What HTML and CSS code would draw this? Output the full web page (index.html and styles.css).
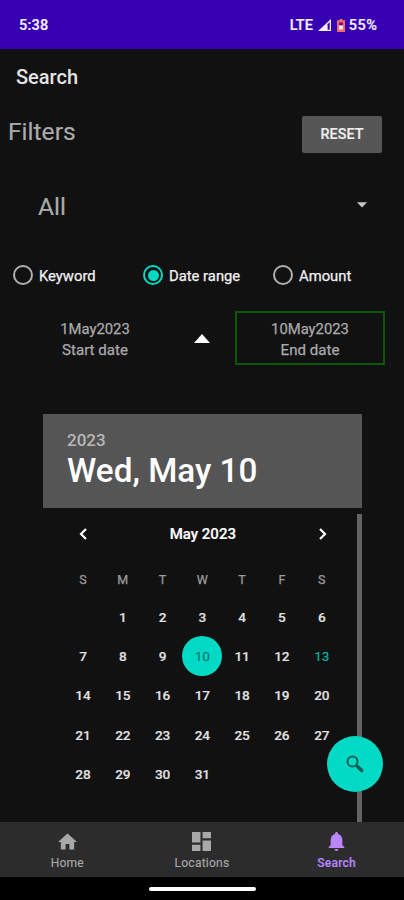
FILE: index.html
```html
<!DOCTYPE html>
<html lang="en">
<head>
<meta charset="utf-8">
<title>Search</title>
<link rel="stylesheet" href="styles.css">
</head>
<body>
<div class="screen">
  <header class="status">
    <span class="clock">5:38</span>
    <div class="indicators">
      <span class="lte">LTE</span>
      <svg class="signal" viewBox="0 0 13 12"><path d="M0 12 13 0v12z" fill="#f4efff"/><path d="M9.6 5.2 11.7 3v7.7H9.6z" fill="#3700b3"/></svg>
      <svg class="battery" viewBox="0 0 8 13"><path d="M2.5 0h3v1.3H8V13H0V1.3h2.5z" fill="#f5686c"/><path d="M2 3.5h4v3H2z" fill="#6b1780"/><path d="M2 6.5h4v4H2z" fill="#fff0ee"/></svg>
      <span class="percent">55%</span>
    </div>
  </header>
  <h1 class="title"><span>Search</span></h1>
  <main class="content">
    <div class="filters"><h2>Filters</h2><button class="reset">RESET</button></div>
    <div class="select"><span>All</span><svg viewBox="0 0 10 6"><path d="M0 .3h10L5 5.5z" fill="#c6c6c6"/></svg></div>
    <div class="radios">
      <div class="radio"><i class="ring"></i><span>Keyword</span></div>
      <div class="radio"><i class="ring on"></i><span>Date range</span></div>
      <div class="radio"><i class="ring"></i><span>Amount</span></div>
    </div>
    <div class="dates">
      <div class="date"><span class="value">1May2023</span><span>Start date</span></div>
      <svg class="up" viewBox="0 0 16 9"><path d="M0 9 8 0l8 9z" fill="#fff"/></svg>
      <div class="date active"><span class="value">10May2023</span><span>End date</span></div>
    </div>
    <section class="picker">
      <div class="picked"><span class="year">2023</span><span class="day">Wed, May 10</span></div>
      <div class="scroll">
        <div class="month">
          <div class="month-nav">
            <svg viewBox="0 0 8 12"><path d="M7 1 2 6l5 5" /></svg>
            <span>May 2023</span>
            <svg viewBox="0 0 8 12"><path d="m1 1 5 5-5 5" /></svg>
          </div>
          <div class="week"><span>S</span><span>M</span><span>T</span><span>W</span><span>T</span><span>F</span><span>S</span></div>
          <div class="days"></div>
        </div>
        <div class="bar"></div>
      </div>
    </section>
  </main>
  <button class="fab" aria-label="Search"><svg viewBox="0 0 18 18"><circle cx="6.5" cy="6.5" r="5" fill="none" stroke="#075e55" stroke-width="2"/><path d="m10 10 1.6 1.5" stroke="#075e55" stroke-width="2"/><path d="m11.8 11.8 3.9 3.7" stroke="#075e55" stroke-width="3.6" stroke-linecap="round"/></svg></button>
  <nav class="tabs">
    <div class="tab"><svg viewBox="2 3 20 17"><path d="M10 20v-6h4v6h5v-8h3L12 3 2 12h3v8z"/></svg><span>Home</span></div>
    <div class="tab"><svg viewBox="3 3 18 18"><path d="M3 13h8V3H3zm0 8h8v-6H3zm10 0h8V11h-8zm0-18v6h8V3z"/></svg><span>Locations</span></div>
    <div class="tab current"><svg viewBox="4 2.5 16 19.5"><path d="M12 22c1.1 0 2-.9 2-2h-4c0 1.1.89 2 2 2zm6-6v-5c0-3.07-1.64-5.64-4.5-6.32V4c0-.83-.67-1.5-1.5-1.5s-1.5.67-1.5 1.5v.68C7.63 5.36 6 7.92 6 11v5l-2 2v1h16v-1z"/></svg><span>Search</span></div>
  </nav>
  <div class="gesture"><i></i></div>
</div>
<script src="calendar.js"></script>
</body>
</html>
```
FILE: calendar.js
```js
const days = document.querySelector(".days");
days.innerHTML = "<span></span>";
for (let d = 1; d <= 31; d++) {
  const cell = document.createElement("span");
  cell.textContent = d;
  if (d === 10) cell.className = "selected";
  if (d === 13) cell.className = "today";
  days.append(cell);
}
```
FILE: styles.css
```css
* { box-sizing: border-box; }
body { margin: 0; background: #111; font-family: Roboto, "Liberation Sans", sans-serif; color: #fff; }
h1, h2 { margin: 0; }
svg { display: block; }
button { border: 0; padding: 0; font-family: inherit; }
.screen { position: relative; width: 404px; height: 900px; overflow: hidden; display: flex; flex-direction: column; }
.status { height: 49px; flex: none; background: #3700b3; display: flex; align-items: center; justify-content: space-between; padding: 1px 27px 0 19px; font-size: 14.5px; font-weight: 500; color: #f4efff; -webkit-text-stroke: .2px currentColor; }
.clock { letter-spacing: .2px; }
.percent { letter-spacing: .5px; margin-right: -.5px; }
.indicators { display: flex; align-items: center; }
.signal { width: 13px; height: 12px; margin: 0 6px 0 5px; }
.battery { width: 8px; height: 13px; margin-right: 4px; }
.title { height: 56px; flex: none; display: flex; align-items: center; padding-left: 16px; font-size: 20px; font-weight: 500; color: #e4e4e4; }
.content { flex: 1; min-height: 0; display: flex; flex-direction: column; }
.filters { height: 54px; flex: none; display: flex; align-items: center; justify-content: space-between; padding: 0 22px 0 8px; }
.filters h2 { font-size: 24.6px; font-weight: 400; color: #aaa; margin-top: -1px; -webkit-text-stroke: .2px currentColor; }
.reset { width: 80px; height: 37px; margin-top: 4px; background: #565656; border-radius: 2px; color: #ededed; font-size: 14.4px; font-weight: 500; -webkit-text-stroke: .2px currentColor; }
.select { height: 94px; flex: none; display: flex; align-items: center; justify-content: space-between; padding: 0 37px 0 38px; font-size: 24.5px; color: #aaa; -webkit-text-stroke: .2px currentColor; }
.select svg { width: 10px; height: 6px; margin-top: -3px; }
.radios { height: 44px; flex: none; display: grid; grid-template-columns: 130px 130px 1fr; padding-left: 13px; }
.radio { display: flex; align-items: center; gap: 6px; font-size: 14.8px; color: #f2f2f2; -webkit-text-stroke: .25px currentColor; }
.radio span { padding-top: 1px; }
.ring { width: 20px; height: 20px; border: 2px solid #b0b0b0; border-radius: 50%; display: grid; place-items: center; }
.ring.on { border-color: #03dac5; }
.ring.on::after { content: ""; width: 11px; height: 11px; border-radius: 50%; background: #03dac5; }
.dates { height: 72px; flex: none; display: grid; grid-template-columns: 150px 65px 150px; padding: 14px 0 4px 20px; }
.date { height: 54px; display: flex; flex-direction: column; align-items: center; padding-top: 8px; font-size: 15.1px; line-height: 20.5px; color: #aaa; }
.date .value { font-size: 14.8px; }
.date.active { border: 2px solid #0c570c; padding-top: 6px; }
.up { width: 16px; height: 9px; margin: 23px 0 0 24px; }
.picker { width: 319px; flex: 1; min-height: 0; margin: 45px 0 0 43px; display: flex; flex-direction: column; }
.picked { height: 94px; flex: none; background: #555; padding: 16px 24px; display: flex; flex-direction: column; }
.year { font-size: 17px; line-height: 21px; font-weight: 500; color: #b8b8b8; }
.day { font-size: 33.3px; line-height: 40px; font-weight: 500; }
.scroll { flex: 1; min-height: 0; padding-top: 6px; display: flex; justify-content: space-between; }
.month { width: 278.6px; margin-left: 20px; }
.month-nav { height: 40px; display: flex; align-items: center; justify-content: space-between; padding: 0 15px 0 16px; font-size: 15px; font-weight: 500; -webkit-text-stroke: .2px currentColor; }
.month-nav svg { width: 8px; height: 12px; fill: none; stroke: #fff; stroke-width: 2.2; }
.week, .days { display: grid; grid-template-columns: repeat(7, 39.8px); text-align: center; }
.week { height: 43px; align-items: center; padding-top: 7px; font-size: 12.5px; color: #9c9c9c; }
.week span, .date span { -webkit-text-stroke: .25px currentColor; }
.days { grid-auto-rows: 39.3px; font-size: 13.6px; font-weight: 500; color: #e2e2e2; letter-spacing: -.2px; -webkit-text-stroke: .15px currentColor; }
.days span { display: grid; place-items: center; }
.days .selected { height: 39.8px; border-radius: 50%; background: #03dac5; color: #07766c; font-weight: 400; }
.days .today { color: #03b9a8; font-weight: 400; }
.bar { width: 5px; background: #636363; }
.fab { position: absolute; left: 327px; top: 736px; width: 56px; height: 56px; border-radius: 50%; background: #03dac5; display: grid; place-items: center; }
.fab svg { width: 18px; height: 18px; }
.tabs { height: 55px; flex: none; display: grid; grid-template-columns: repeat(3, 1fr); background: #2c2c2c; color: #a8a8a8; font-size: 12px; }
.tab { display: flex; flex-direction: column; align-items: center; padding-top: 10px; letter-spacing: .25px; -webkit-text-stroke: .15px currentColor; }
.tab svg { height: 19px; width: 19px; fill: currentColor; margin-bottom: 5px; }
.tab span { line-height: 14px; }
.current { color: #bb86fc; font-weight: 500; }
.gesture { height: 23px; flex: none; background: #000; display: flex; justify-content: center; padding-top: 10px; }
.gesture i { width: 107px; height: 4px; border-radius: 2px; background: #fff; }
```
